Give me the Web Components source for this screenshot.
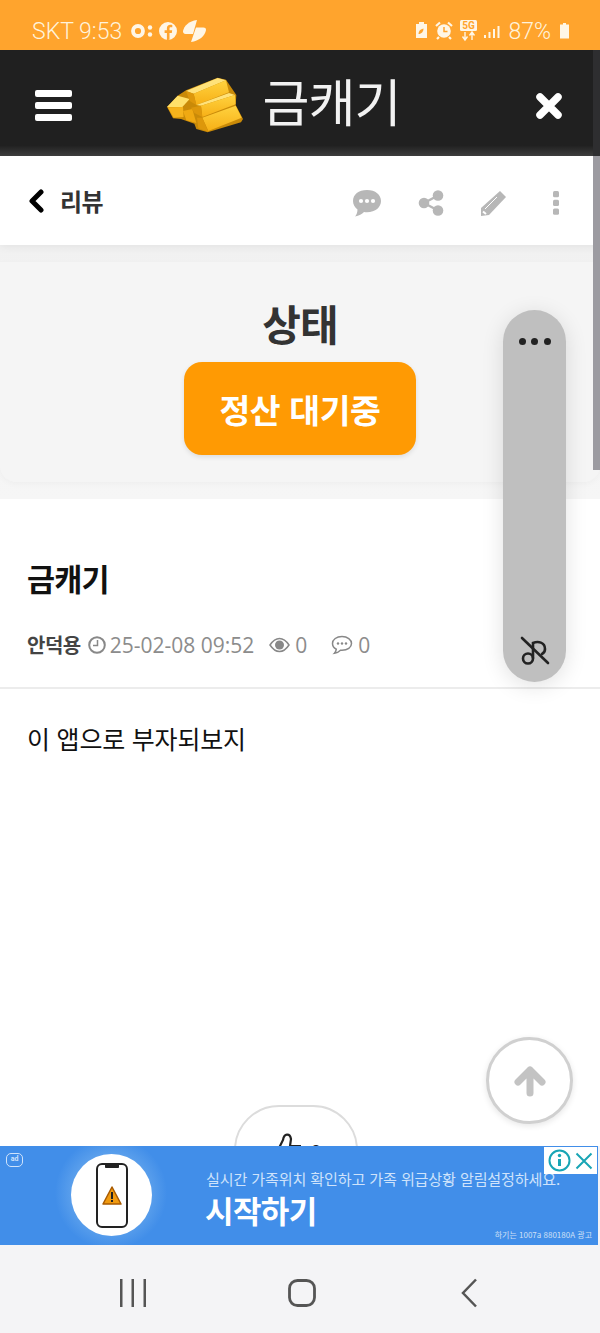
<!DOCTYPE html>
<html lang="ko"><head><meta charset="utf-8"><title>금캐기</title>
<style>
html,body{margin:0;padding:0;height:1333px;overflow:hidden;background:#fff}
body{font-family:"Noto Sans CJK KR","Noto Sans",sans-serif}
</style></head><body>
<app-shell>
  <status-bar></status-bar>
  <top-header></top-header>
  <main-view>
    <sub-nav></sub-nav>
    <state-card></state-card>
    <post-view></post-view>
  </main-view>
  <ad-banner></ad-banner>
  <nav-bar></nav-bar>
</app-shell>
<script>
function def(name, html){
  customElements.define(name, class extends HTMLElement{
    constructor(){super();this.attachShadow({mode:'open'}).innerHTML=html;}
  });
}
const KR='"Noto Sans CJK KR","Noto Sans",sans-serif';

def('app-shell',`<style>:host{display:flex;flex-direction:column;width:600px;height:1333px;overflow:hidden;position:relative}</style><slot></slot>`);

def('status-bar',`<style>
:host{display:flex;align-items:center;justify-content:space-between;box-sizing:border-box;height:50px;padding:12px 31px 0 32px;background:#ffa42d;color:#fff3dc;font:300 23px Roboto,"Noto Sans",sans-serif;flex:none}
.g{display:flex;align-items:center}
svg{display:block;fill:#fff6e6}
</style>
<div class="g"><span>SKT 9:53</span>
<svg style="margin-left:9px" width="76" height="26" viewBox="0 0 76 26">
 <circle cx="7" cy="13" r="5" fill="none" stroke="#fff6e6" stroke-width="3.800"/><circle cx="19" cy="9.500" r="2.200"/><circle cx="19" cy="16.500" r="2.200"/>
 <path fill-rule="evenodd" d="M37 4a9 9 0 1 0 0 18 9 9 0 0 0 0-18zM38.500 22V15h2.300l.4-2.800h-2.700v-1.600c0-.8.3-1.300 1.400-1.300h1.400V6.900c-.5 0-1.200-.1-2-.1-2.100 0-3.400 1.200-3.400 3.500v1.900h-2.300V15h2.300v7z"/>
 <path d="M66 2 C58 3 53 8 52 13 C52 16 54 16 56 16 H62z"/><path d="M60 24 C68 23 74 18 75 12 C75 9.500 73 9.500 71 9.500 H65z"/>
</svg></div>
<div class="g">
<svg width="90" height="30" viewBox="0 0 90 30">
 <path d="M1 8h3V6h5v2h3v14H1z"/><path d="M3.500 18c0-3 2-5 5-5.500 0 3-2 5.500-5 5.500z" fill="#ffa42d"/>
 <circle cx="29" cy="15" r="6.800"/><path d="M29 11v4.500h3.500" fill="none" stroke="#ffa42d" stroke-width="1.500"/><path d="M21 10l4-3.500M37 10l-4-3.500M24 21l-2 2M34 21l2 2" stroke="#fff6e6" stroke-width="2.200"/>
 <rect x="45" y="4" width="17" height="11" rx="1.500"/><text x="53.500" y="13" font-family="Roboto" font-weight="700" font-size="10" text-anchor="middle" fill="#ffa42d">5G</text>
 <path d="M50 16v7m-2.500-2.500L50 24l2.500-3.500M57 24v-7m-2.500 2.500L57 16l2.500 3.500" stroke="#fff6e6" stroke-width="1.400" fill="none"/>
 <rect x="69" y="19" width="2" height="3"/><rect x="73.500" y="16" width="2" height="6"/><rect x="78" y="13" width="2" height="9"/><rect x="82.500" y="10" width="2" height="12"/>
</svg>
<span style="margin-left:3px">87%</span>
<svg style="margin-left:9px" width="9" height="16" viewBox="0 0 9 16"><path d="M3 0h3v1.500h3V15.500H0V1.500h3z"/></svg>
</div>`);

def('top-header',`<style>
:host{display:flex;align-items:center;box-sizing:border-box;height:106px;flex:none;background:linear-gradient(#202020 0,#202020 90%,#3d3d3d 100%);padding:0 35px;position:relative;color:#fff}
.c{flex:1;display:flex;align-items:center;justify-content:center;gap:19px;padding-right:40px}
.t{font:400 51px/1 ${KR};letter-spacing:-1px;color:#f2f2f2;margin-top:-6px}
svg{display:block}
.bars{display:flex;flex-direction:column;gap:5px;width:37px;margin-top:5px}
.bars i{display:block;height:7px;border-radius:2px;background:#fff}
.sb{position:absolute;right:0;top:0;bottom:0;width:7px;background:#2e2e30}
</style>
<div class="bars"><i></i><i></i><i></i></div>
<div class="c">
<svg width="78" height="56" viewBox="25 50 234 168" style="margin-top:3px">
 <defs><linearGradient id="a" x1="0" y1="0" x2="0" y2="1"><stop offset="0" stop-color="#ffd23f"/><stop offset="1" stop-color="#f7b016"/></linearGradient></defs>
 <path d="M28 140 L60 106 L85 90 L180 52 L205 58 L236 104 L234 134 L256 176 L250 186 L150 216 L116 206 L110 190 L70 176 L46 174z" fill="#c98a08"/>
 <path d="M28 140 L60 106 L96 116 L74 140z" fill="#ffe06a"/><path d="M30 141 L76 140 L78 170 L48 172z" fill="#f6b31c"/>
 <path d="M76 152 L104 146 L116 188 L86 180z" fill="#f0a912"/>
 <path d="M85 92 L180 53 L205 60 L108 100z" fill="#ffe27a"/><path d="M108 100 L205 60 L214 96 L116 134z" fill="url(#a)"/><path d="M85 92 L108 100 L116 134 L96 122z" fill="#dd970b"/>
 <path d="M116 134 L214 98 L232 104 L130 136z" fill="#ffe27a"/><path d="M130 136 L232 104 L234 132 L134 170z" fill="url(#a)"/><path d="M100 142 L130 136 L134 170 L110 158z" fill="#dd970b"/>
 <path d="M134 172 L234 136 L252 172 L152 212z" fill="url(#a)"/><path d="M118 172 L134 172 L152 214 L122 204z" fill="#dd970b"/>
</svg>
<span class="t">금캐기</span>
</div>
<svg width="30" height="30" viewBox="0 0 30 30" style="margin:5px 1px 0 0"><path d="M6 6 L24 24 M24 6 L6 24" stroke="#fff" stroke-width="7.500" stroke-linecap="round"/></svg>
<div class="sb"></div>`);

def('main-view',`<style>:host{display:block;flex:1;min-height:0;position:relative;overflow:hidden;background:#fff}
.sb{position:absolute;top:0;right:0;width:7px;height:314px;background:#9c9ba1;z-index:2}
.pill{position:absolute;left:503px;top:154px;width:63px;height:372px;border-radius:32px;background:#bfbfbf;box-shadow:0 4px 22px rgba(0,0,0,.12);display:flex;flex-direction:column;align-items:center;justify-content:space-between;padding:28px 0 15px;box-sizing:border-box;z-index:3}
.d{display:flex;gap:5.500px}.d i{width:7px;height:7px;border-radius:50%;background:#222}
.up{position:absolute;left:486px;top:881px;width:87px;height:87px;box-sizing:border-box;border-radius:50%;border:3px solid #d0d0d0;background:#fff;box-shadow:0 2px 6px rgba(0,0,0,.1);display:flex;align-items:center;justify-content:center}
svg{display:block}
</style><slot></slot>
<div class="sb"></div>
<div class="pill"><div class="d"><i></i><i></i><i></i></div>
<svg width="32" height="32" viewBox="0 0 32 32" fill="none" stroke="#222" stroke-width="2.600" stroke-linecap="round"><circle cx="9" cy="23.500" r="5"/><path d="M14 23V8c5-2 12-1 12 6 0 2-1 4-3 5"/><path d="M3 3 L29 28"/></svg>
</div>
<div class="up"><svg width="34" height="32" viewBox="0 0 34 32"><path d="M17 5 L5 17 M17 5 L29 17 M17 5 V28" fill="none" stroke="#c3c3c3" stroke-width="7" stroke-linecap="round" stroke-linejoin="round"/></svg></div>`);

def('sub-nav',`<style>
:host{display:flex;align-items:center;box-sizing:border-box;height:89px;padding:0 41px 0 27px;background:#fff;box-shadow:0 2px 8px rgba(0,0,0,.06);position:relative;z-index:1}
.b{font:700 24px/1 ${KR};color:#333;margin-left:15px;letter-spacing:-.6px}
.i{margin-left:auto;display:flex;align-items:center;margin-top:5px}
svg{display:block}
</style>
<svg width="18" height="24" viewBox="0 0 18 24"><path d="M14 3 L5 12 L14 21" fill="none" stroke="#000" stroke-width="5" stroke-linecap="round" stroke-linejoin="round"/></svg>
<span class="b">리뷰</span>
<div class="i">
<svg width="32" height="28" viewBox="0 0 32 28"><path fill="#b7b7b7" d="M16 1C7.500 1 2 5.500 2 12c0 3.500 1.800 6.500 4.500 8.500C6.500 23 5.500 26 4 27.500c4 -.5 7-2.500 9-4.500 1 .2 2 .2 3 .2 8.500 0 14-5 14-11.200S24.500 1 16 1z"/><circle cx="10" cy="12" r="2.100" fill="#fff"/><circle cx="16" cy="12" r="2.100" fill="#fff"/><circle cx="22" cy="12" r="2.100" fill="#fff"/></svg>
<svg style="margin-left:35px" width="26" height="26" viewBox="0 0 26 26" fill="#b7b7b7"><circle cx="20" cy="5.500" r="5.300"/><circle cx="6" cy="13" r="5.300"/><circle cx="20" cy="20.500" r="5.300"/><path d="M6 13 L20 5.500 M6 13 L20 20.500" stroke="#b7b7b7" stroke-width="2.500"/></svg>
<svg style="margin-left:36px" width="27" height="27" viewBox="0 0 27 27"><path fill="#b7b7b7" d="M20 1 L26 7 L9 25 L1 26 L1 18z"/><path d="M5 19 L17 7" stroke="#fff" stroke-width="1"/><path d="M3 21.500 L6 24" stroke="#fff" stroke-width="2"/></svg>
<svg style="margin-left:46px" width="6" height="24" viewBox="0 0 6 24" fill="#b7b7b7"><rect y="0" width="6" height="6.200" rx="1.500"/><rect y="8.800" width="6" height="6.200" rx="1.500"/><rect y="17.600" width="6" height="6.200" rx="1.500"/></svg>
</div>`);

def('state-card',`<style>
:host{display:block;box-sizing:border-box;height:254px;padding:17px 0 16px;background:linear-gradient(#f1f1f1,#f6f6f6)}
.c{box-sizing:border-box;height:220px;background:#f5f5f5;border-radius:0 0 16px 16px;display:flex;flex-direction:column;align-items:center;box-shadow:0 2px 6px rgba(0,0,0,.03)}
h2{margin:40px 0 0;font:700 42px/1 ${KR};color:#333;letter-spacing:-1px;height:44px}
.b{width:232px;height:93px;margin-top:16px;border-radius:18px;background:#ff9a03;color:#fff;font:700 33.500px/93px ${KR};text-align:center;letter-spacing:-.4px;box-shadow:0 2px 5px rgba(0,0,0,.1)}
</style><div class="c"><h2>상태</h2><div class="b">정산 대기중</div></div>`);

def('post-view',`<style>
:host{display:block;background:#fff}
h1{margin:0;padding:56px 27px 0;font:700 30.500px/46px ${KR};color:#111;letter-spacing:-.8px;height:46px}
.m{display:flex;align-items:center;height:28px;margin-top:30px;padding-left:27px;color:#8c8c8c;font:400 21px/28px "Open Sans",sans-serif}
.n{font:700 20px/28px ${KR};color:#444;letter-spacing:-.5px}
svg{display:block}
hr{border:0;height:1.500px;background:#ececec;margin:28px 0 0}
p{margin:0;padding:29.500px 27px 0;font:400 25px/40px ${KR};color:#111;letter-spacing:-.2px}
.like{box-sizing:border-box;width:124px;height:90px;margin:347px 0 0 234px;border:2px solid #dcdcdc;border-radius:45px;background:#fff;display:flex;justify-content:center;padding-top:21px;gap:8px;color:#222;font:21px "Open Sans",sans-serif}
</style>
<h1>금캐기</h1>
<div class="m"><span class="n">안덕용</span>
<svg style="margin:0 4px 0 7px" width="18" height="18" viewBox="0 0 18 18" fill="none" stroke="#888" stroke-width="2"><circle cx="9" cy="9" r="7.800"/><path d="M9.500 4v5.500H5" stroke-width="1.500"/></svg>
<span>25-02-08 09:52</span>
<svg style="margin:0 5px 0 15px" width="21" height="16" viewBox="0 0 21 16"><path d="M1 8C4 3.500 7 1.500 10.500 1.500S17 3.500 20 8c-3 4.500-6 6.500-9.500 6.500S4 12.500 1 8z" fill="none" stroke="#888" stroke-width="1.500"/><circle cx="10.500" cy="8" r="4.500" fill="#888"/></svg>
<span>0</span>
<svg style="margin:0 5px 0 24px" width="22" height="20" viewBox="0 0 22 20"><path d="M11 1.500C5.500 1.500 1.500 4.500 1.500 8.500c0 2.500 1.500 4.500 3.800 5.700-.2 1.500-.8 3-1.800 4 2.500-.3 4.500-1.500 6-3 .5 0 1 .1 1.500.1 5.500 0 9.500-3 9.500-6.800s-4-7-9.500-7z" fill="none" stroke="#888" stroke-width="1.500"/><circle cx="7" cy="8.500" r="1.200" fill="#888"/><circle cx="11" cy="8.500" r="1.200" fill="#888"/><circle cx="15" cy="8.500" r="1.200" fill="#888"/></svg>
<span>0</span></div>
<hr>
<p>이 앱으로 부자되보지</p>
<div class="like"><svg width="32" height="40" viewBox="0 0 32 40"><path d="M1 20 H9 L13 12 C14 5 20 5 21 11 L20 18 H31" fill="none" stroke="#222" stroke-width="2.200"/></svg><span style="line-height:40px;margin-top:5px">0</span></div>`);

def('ad-banner',`<style>
:host{display:flex;flex:none;box-sizing:border-box;height:99px;background:#418ee9;position:relative;border-right:2px solid #f3f3f6;overflow:hidden}
.ic{position:absolute;left:6px;top:7px;width:17px;height:14px;border:1.500px solid #cfe3fb;border-radius:5px;box-sizing:border-box;color:#cfe3fb;font:700 7px/11px Roboto,sans-serif;text-align:center}
.glow{position:absolute;left:55px;top:-9px;width:112px;height:112px;border-radius:50%;background:radial-gradient(closest-side,#5a9fec 70%,#418ee9 100%)}
.pic{position:absolute;left:71px;top:8px;width:81px;height:82px;border-radius:50%;background:#fff;display:flex;align-items:center;justify-content:center}
.tx{position:absolute;left:206px;top:22px;color:#cfe3fb;font:400 15.100px/20px ${KR};letter-spacing:-.15px;white-space:nowrap}
.go{position:absolute;left:205px;top:44px;color:#fff;font:700 31px/40px ${KR};letter-spacing:-.6px}
.fine{position:absolute;right:6px;top:83px;color:#cfe0f6;font:400 8px/12px ${KR};white-space:nowrap}
.close{position:absolute;right:1px;top:1px;width:53px;height:27px;background:#fff;display:flex;align-items:center;justify-content:space-around;box-sizing:border-box;padding:0 2px}
svg{display:block}
</style>
<div class="ic">ad</div>
<div class="glow"></div>
<div class="pic"><svg width="32" height="65" viewBox="0 0 32 65"><rect x="1" y="1" width="30" height="63" rx="5" fill="#fff" stroke="#222" stroke-width="2"/><path d="M9 2h14v2c0 .8-.5 1-1 1H10c-.5 0-1-.2-1-1z" fill="#222"/><path d="M16 24 L25 41 H7z" fill="#f09a10" stroke="#a85a00" stroke-width="1.500" stroke-linejoin="round"/><rect x="15" y="29" width="2" height="7" fill="#222"/><rect x="15" y="37" width="2" height="2" fill="#222"/></svg></div>
<div class="tx">실시간 가족위치 확인하고 가족 위급상황 알림설정하세요.</div>
<div class="go">시작하기</div>
<div class="fine">하기는 1007a 880180A 광고</div>
<div class="close">
<svg width="23" height="23" viewBox="0 0 23 23" fill="none" stroke="#19a5b5" stroke-width="2"><circle cx="11.500" cy="11.500" r="10"/><path d="M11.500 10v7" stroke-width="3"/><circle cx="11.500" cy="6.500" r="1.700" fill="#19a5b5" stroke="none"/></svg>
<svg width="18" height="18" viewBox="0 0 18 18"><path d="M1.500 1.500 L16.500 16.500 M16.500 1.500 L1.500 16.500" stroke="#19a5b5" stroke-width="2"/></svg>
</div>`);

def('nav-bar',`<style>
:host{display:flex;flex:none;height:88px;box-sizing:border-box;background:#f4f4f6;position:relative;align-items:center;padding:8px 122px 0 120px;justify-content:space-between}
svg{display:block}
</style>
<svg width="26" height="28" viewBox="0 0 26 28" fill="#555"><rect x="0" y="0" width="2.500" height="28"/><rect x="11.500" y="0" width="2.500" height="28"/><rect x="23.500" y="0" width="2.500" height="28"/></svg>
<svg width="28" height="28" viewBox="0 0 28 28" style="margin-left:-4px"><rect x="1.500" y="1.500" width="25" height="25" rx="8" fill="none" stroke="#555" stroke-width="2.800"/></svg>
<svg width="17" height="30" viewBox="0 0 17 30"><path d="M15 1.500 L2 15 L15 28.500" fill="none" stroke="#555" stroke-width="2.500"/></svg>`);
</script>
</body></html>
